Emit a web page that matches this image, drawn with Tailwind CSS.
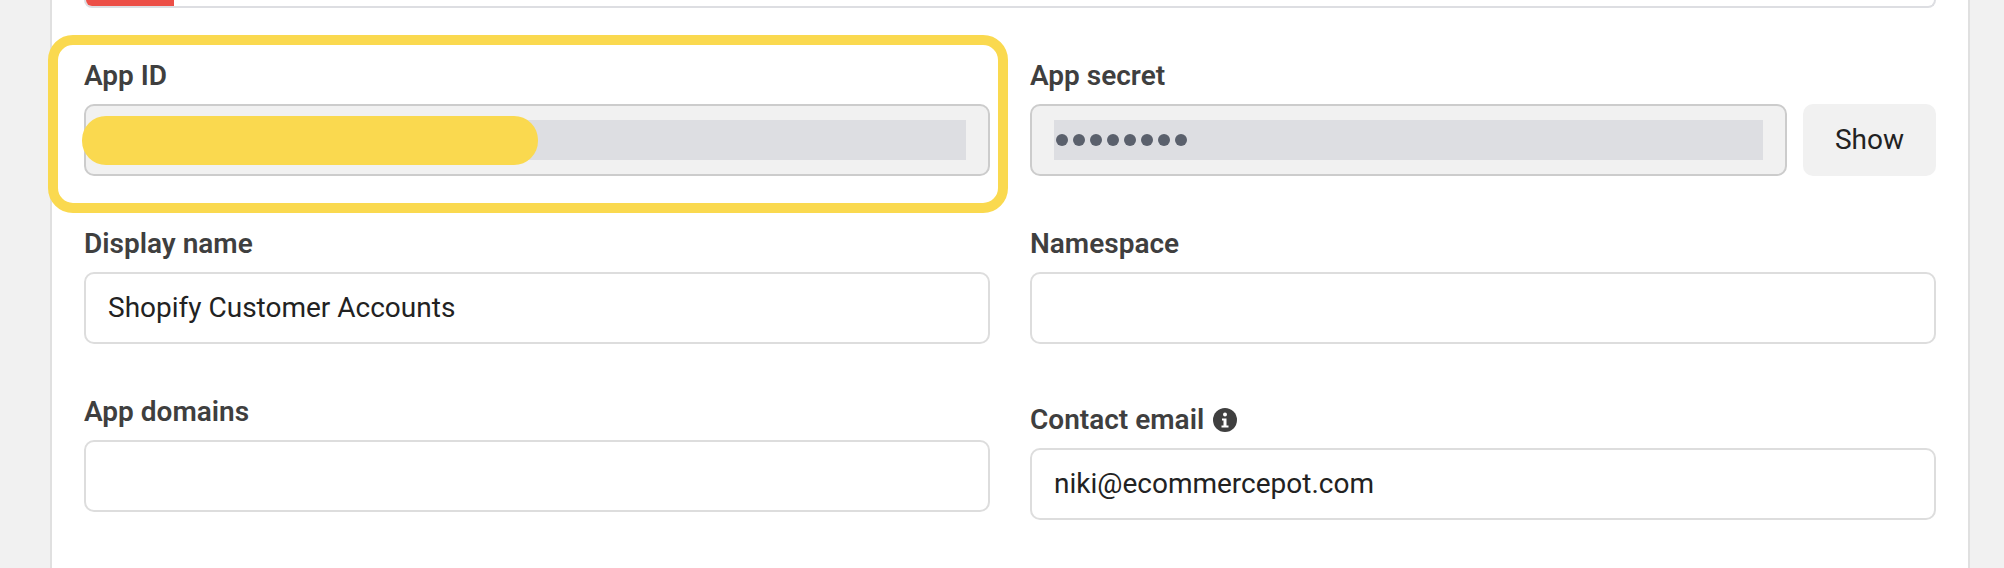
<!DOCTYPE html>
<html lang="en">
<head>
  <meta charset="UTF-8" />
  <title>App settings</title>
  <script src="https://cdn.jsdelivr.net/npm/@tailwindcss/browser@4"></script>
</head>
<body class="bg-[#f1f1f1] font-['Roboto',sans-serif] text-[#222222]">
  <div class="h-[568px] overflow-hidden">
    <main class="ml-[50px] w-[1920px] h-full bg-white border-x-2 border-[#e0e0e0] px-[32px]">
      <!-- bottom edge of the progress box above -->
      <div class="h-[8px] border-b-2 border-x-2 border-[#dddee2] rounded-b-[10px] overflow-hidden">
        <div class="w-[88px] h-full bg-[#ec4f47]"></div>
      </div>

      <form class="grid grid-cols-2 gap-x-[40px] gap-y-[52px] mt-[52px] w-[1852px]">
        <div class="relative">
          <label class="block h-[32px] mb-[12px] text-[28px] leading-[32px] font-semibold text-[#3f3f3f]">App ID</label>
          <div class="h-[72px] border-2 border-[#cccccc] rounded-[10px] bg-[#f1f1f1] flex items-center pl-[22px] pr-[22px]">
            <div class="w-full h-[40px] bg-[#dddee2]"></div>
          </div>
          <!-- redaction + highlight -->
          <div class="absolute left-[-2px] top-[56px] w-[456px] h-[49px] rounded-[24px] bg-[#fad94f]"></div>
          <div class="absolute -left-[36px] -top-[25px] -right-[18px] -bottom-[37px] border-[10px] border-[#fad94f] rounded-[25px]"></div>
        </div>

        <div>
          <label class="block h-[32px] mb-[12px] text-[28px] leading-[32px] font-semibold text-[#3f3f3f]">App secret</label>
          <div class="flex gap-[16px]">
            <div class="flex-1 h-[72px] border-2 border-[#cccccc] rounded-[10px] bg-[#f1f1f1] flex items-center pl-[22px] pr-[22px]">
              <div class="w-full h-[40px] bg-[#dddee2] flex items-center gap-[5px] pl-[2px]">
                <span class="w-[12px] h-[12px] rounded-full bg-[#5a606c]"></span>
                <span class="w-[12px] h-[12px] rounded-full bg-[#5a606c]"></span>
                <span class="w-[12px] h-[12px] rounded-full bg-[#5a606c]"></span>
                <span class="w-[12px] h-[12px] rounded-full bg-[#5a606c]"></span>
                <span class="w-[12px] h-[12px] rounded-full bg-[#5a606c]"></span>
                <span class="w-[12px] h-[12px] rounded-full bg-[#5a606c]"></span>
                <span class="w-[12px] h-[12px] rounded-full bg-[#5a606c]"></span>
                <span class="w-[12px] h-[12px] rounded-full bg-[#5a606c]"></span>
              </div>
            </div>
            <button type="button" class="w-[133px] h-[72px] rounded-[10px] bg-[#f1f1f1] text-[28px]">Show</button>
          </div>
        </div>

        <div>
          <label class="block h-[32px] mb-[12px] text-[28px] leading-[32px] font-semibold text-[#3f3f3f]">Display name</label>
          <div class="h-[72px] border-2 border-[#dddddd] rounded-[10px] flex items-center px-[22px] text-[28px]">Shopify Customer Accounts</div>
        </div>

        <div>
          <label class="block h-[32px] mb-[12px] text-[28px] leading-[32px] font-semibold text-[#3f3f3f]">Namespace</label>
          <div class="h-[72px] border-2 border-[#dddddd] rounded-[10px]"></div>
        </div>

        <div>
          <label class="block h-[32px] mb-[12px] text-[28px] leading-[32px] font-semibold text-[#3f3f3f]">App domains</label>
          <div class="h-[72px] border-2 border-[#dddddd] rounded-[10px]"></div>
        </div>

        <div>
          <label class="flex items-end gap-[9px] h-[40px] mb-[12px] text-[28px] leading-[32px] font-semibold text-[#3f3f3f]">
            Contact email
            <svg class="w-[24px] h-[24px] mb-[4px]" viewBox="0 0 24 24">
              <circle cx="12" cy="12" r="12" fill="#3f3f3f" />
              <circle cx="12" cy="6.5" r="2" fill="#fff" />
              <path d="M9 10.5h4.5v7H15.5v2h-7v-2H10.5v-5H9z" fill="#fff" />
            </svg>
          </label>
          <div class="h-[72px] border-2 border-[#dddddd] rounded-[10px] flex items-center px-[22px] text-[28px]">niki@ecommercepot.com</div>
        </div>
      </form>
    </main>
  </div>
</body>
</html>
